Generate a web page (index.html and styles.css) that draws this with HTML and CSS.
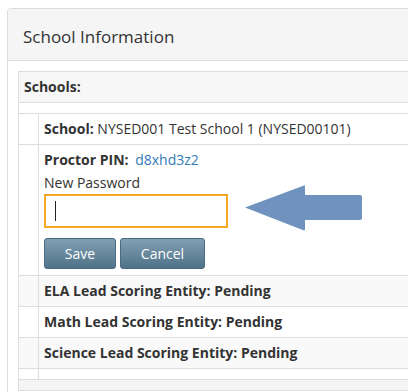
FILE: index.html
```html
<!DOCTYPE html>
<html lang="en">
<head>
    <meta charset="UTF-8">
    <title>School Information</title>
    <link rel="stylesheet" href="styles.css">
</head>
<body>
    <div class="page">
        <div class="panel">
            <div class="panel-heading">School Information</div>
            <div class="panel-body">
                <table class="schools">
                    <thead>
                        <tr><th colspan="2">Schools:</th></tr>
                    </thead>
                    <tbody>
                        <tr class="spacer"><td colspan="2"></td></tr>
                        <tr>
                            <td class="indent"></td>
                            <td><b>School:</b> NYSED001 Test School 1 (NYSED00101)</td>
                        </tr>
                        <tr>
                            <td class="indent"></td>
                            <td class="proctor">
                                <div class="pin"><b>Proctor PIN:</b> <a href="#">d8xhd3z2</a></div>
                                <label class="field-label" for="newPassword">New Password</label>
                                <div class="input-wrap">
                                    <input type="password" id="newPassword" class="field">
                                    <span class="caret"></span>
                                </div>
                                <div class="actions">
                                    <button class="btn btn-save">Save</button>
                                    <button class="btn btn-cancel">Cancel</button>
                                </div>
                            </td>
                        </tr>
                        <tr class="alt">
                            <td class="indent"></td>
                            <td><b>ELA Lead Scoring Entity: Pending</b></td>
                        </tr>
                        <tr>
                            <td class="indent"></td>
                            <td><b>Math Lead Scoring Entity: Pending</b></td>
                        </tr>
                        <tr class="alt">
                            <td class="indent"></td>
                            <td><b>Science Lead Scoring Entity: Pending</b></td>
                        </tr>
                        <tr class="spacer">
                            <td class="indent"></td>
                            <td></td>
                        </tr>
                        <tr class="spacer alt"><td colspan="2"></td></tr>
                    </tbody>
                </table>
            </div>
        </div>

        <!-- arrow pointing at the password field -->
        <svg class="pointer" width="120" height="48" viewBox="0 0 120 48">
            <path d="M1 22.5 L60 0.5 L61 0.5 L61 10 L116 10 Q118 10 118 12 L118 33 Q118 35 116 35 L61 35 L61 45 L60 45.5 Z" fill="#6f92bf"/>
        </svg>
    </div>
</body>
</html>
```

FILE: styles.css
```css
body {
    margin: 0;
    font-family: "Open Sans", "Noto Sans", sans-serif;
    font-size: 14px;
    line-height: 20px;
    color: #333;
    background: #fff;
    overflow: hidden;
}

.page {
    position: relative;
    padding: 8px 0 0 7px;
    width: 600px;
}

.panel {
    border: 1px solid #ddd;
    border-radius: 4px;
    background: #fff;
}

.panel-heading {
    background-color: #f5f5f5;
    border-bottom: 1px solid #ddd;
    border-radius: 3px 3px 0 0;
    padding: 17px 15px 13px 15px;
    font-size: 17px;
    line-height: 21px;
}

.panel-body {
    padding: 10px;
}

.schools {
    width: 100%;
    border-collapse: collapse;
    border: 1px solid #ddd;
}

.schools th,
.schools td {
    padding: 5px;
    border-top: 1px solid #ddd;
    text-align: left;
    vertical-align: top;
}

.schools th {
    background-color: #f7f7f7;
    font-weight: bold;
}

.schools td.indent {
    width: 9px;
    border-right: 1px solid #ddd;
}

.schools tr.alt td {
    background-color: #f9f9f9;
}

.schools tr.spacer td {
    height: 0;
    padding: 5px;
}

.schools tr.spacer.alt td {
    background-color: #f5f5f5;
}

.proctor {
    padding-bottom: 6px !important;
}

.pin a {
    color: #337ab7;
    text-decoration: none;
    margin-left: 3px;
}

.field-label {
    display: block;
    margin-top: 3px;
}

.input-wrap {
    position: relative;
    width: 184px;
    margin-top: 1px;
}

.field {
    display: block;
    box-sizing: border-box;
    width: 184px;
    height: 34px;
    border: 2px solid #f5a623;
    border-radius: 0;
    outline: none;
    padding: 6px 10px;
    font: inherit;
    caret-color: transparent;
}

.caret {
    position: absolute;
    left: 11px;
    top: 7px;
    width: 1px;
    height: 20px;
    background: #222;
}

.actions {
    display: flex;
    gap: 4px;
    margin-top: 10px;
}

.btn {
    box-sizing: border-box;
    height: 31px;
    border: 1px solid #4a6b80;
    border-radius: 3px;
    background: linear-gradient(to bottom, #819fb3, #4f7288);
    color: #fff;
    font-family: inherit;
    font-size: 14px;
    padding: 0;
    cursor: pointer;
}

.btn-save {
    width: 72px;
}

.btn-cancel {
    width: 85px;
}

.pointer {
    position: absolute;
    left: 244px;
    top: 185px;
}
```
